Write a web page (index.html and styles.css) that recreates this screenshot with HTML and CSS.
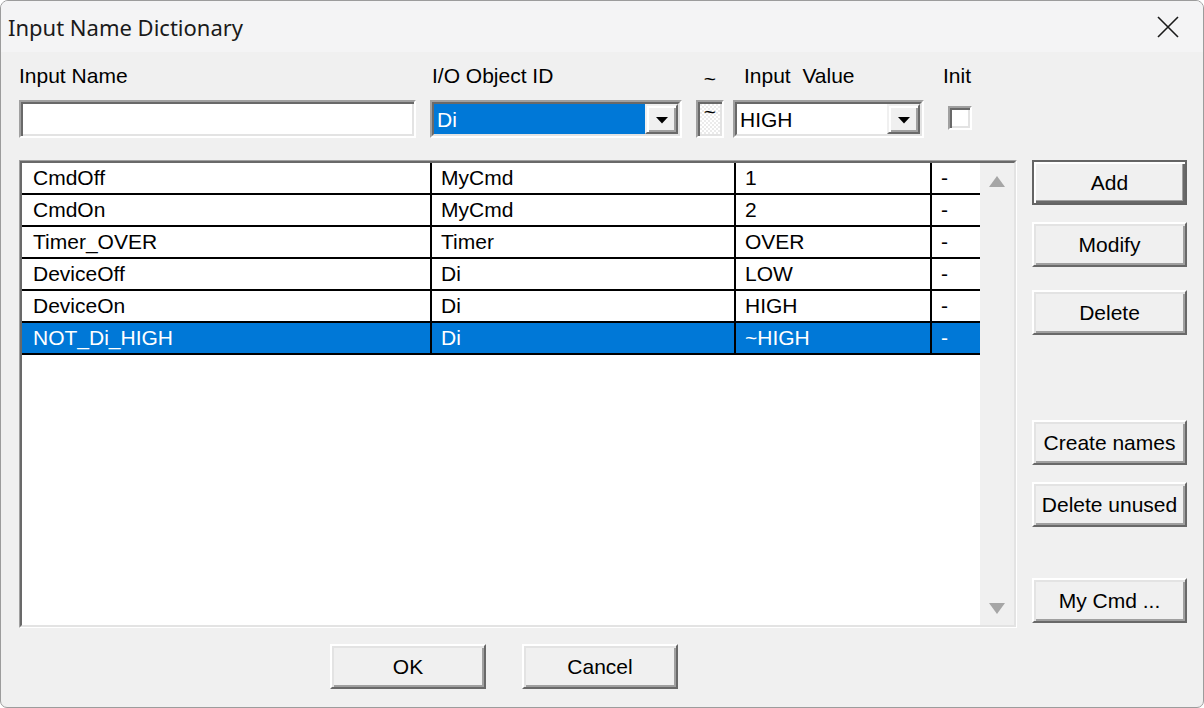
FILE: index.html
```html
<!DOCTYPE html>
<html>
<head>
<meta charset="utf-8">
<title>Input Name Dictionary</title>
<link rel="stylesheet" href="styles.css">
</head>
<body>
<div class="window">
  <div class="titlebar">
    <span class="title">Input Name Dictionary</span>
    <span class="close"><svg width="22" height="22" viewBox="0 0 22 22"><path d="M1 1L21 21M21 1L1 21" stroke="#1a1a1a" stroke-width="1.6" fill="none"/></svg></span>
  </div>
  <div class="content">
    <div class="fields">
      <div class="field f-name">
        <div class="label">Input Name</div>
        <div class="edit"></div>
      </div>
      <div class="field f-obj">
        <div class="label">I/O Object ID</div>
        <div class="combo"><div class="combo-inner">
          <div class="combo-text sel">Di</div>
          <div class="drop"><svg width="12" height="7" viewBox="0 0 12 7"><path d="M0 0H12L6 6.5Z" fill="#000"/></svg></div>
        </div></div>
      </div>
      <div class="field f-not">
        <div class="label tilde">~</div>
        <div class="toggle">~</div>
      </div>
      <div class="field f-val">
        <div class="label">Input&nbsp; Value</div>
        <div class="combo"><div class="combo-inner">
          <div class="combo-text">HIGH</div>
          <div class="drop"><svg width="12" height="7" viewBox="0 0 12 7"><path d="M0 0H12L6 6.5Z" fill="#000"/></svg></div>
        </div></div>
      </div>
      <div class="field f-init">
        <div class="label">Init</div>
        <div class="check-row"><div class="check"></div></div>
      </div>
    </div>

    <div class="main">
      <div class="list"><div class="list-inner">
        <div class="rows">
          <div class="row"><div class="cell">CmdOff</div><div class="cell">MyCmd</div><div class="cell">1</div><div class="cell">-</div></div>
          <div class="row"><div class="cell">CmdOn</div><div class="cell">MyCmd</div><div class="cell">2</div><div class="cell">-</div></div>
          <div class="row"><div class="cell">Timer_OVER</div><div class="cell">Timer</div><div class="cell">OVER</div><div class="cell">-</div></div>
          <div class="row"><div class="cell">DeviceOff</div><div class="cell">Di</div><div class="cell">LOW</div><div class="cell">-</div></div>
          <div class="row"><div class="cell">DeviceOn</div><div class="cell">Di</div><div class="cell">HIGH</div><div class="cell">-</div></div>
          <div class="row sel"><div class="cell">NOT_Di_HIGH</div><div class="cell">Di</div><div class="cell">~HIGH</div><div class="cell">-</div></div>
        </div>
        <div class="vscroll">
          <svg width="16" height="11" viewBox="0 0 16 11"><path d="M8 0L16 11H0Z" fill="#a6a6a6"/></svg>
          <svg width="16" height="11" viewBox="0 0 16 11"><path d="M0 0H16L8 11Z" fill="#a6a6a6"/></svg>
        </div>
      </div></div>
      <div class="side">
        <div class="btn default">Add</div>
        <div class="btn b-modify">Modify</div>
        <div class="btn b-delete">Delete</div>
        <div class="btn b-create">Create names</div>
        <div class="btn b-unused">Delete unused</div>
        <div class="btn b-mycmd">My Cmd ...</div>
      </div>
    </div>

    <div class="footer">
      <div class="btn">OK</div>
      <div class="btn">Cancel</div>
    </div>
  </div>
</div>
</body>
</html>
```

FILE: styles.css
```css
html, body {
  margin: 0;
  padding: 0;
  background: #ffffff;
}

body {
  font-family: "Liberation Sans", Arial, sans-serif;
  color: #000;
}

.window {
  width: 1204px;
  height: 708px;
  box-sizing: border-box;
  border: 1px solid #9c9c9c;
  border-radius: 8px 8px 7px 7px;
  background: #f0f0f0;
  overflow: hidden;
  display: flex;
  flex-direction: column;
}

.titlebar {
  height: 51px;
  flex: none;
  display: flex;
  align-items: center;
  background: #f4f4f5;
  padding-left: 7px;
}

.title {
  font-family: "Noto Sans", "Open Sans", sans-serif;
  font-size: 22px;
  color: #1a1a1a;
}

.close {
  margin-left: auto;
  margin-right: 24px;
  width: 22px;
  height: 22px;
  display: flex;
}

.content {
  flex: 1;
  padding: 0 16px 0 18px;
}

/* top field row */
.fields {
  display: flex;
  margin-top: 12px;
}

.label {
  height: 24px;
  line-height: 24px;
  font-size: 21px;
  margin-bottom: 12px;
  white-space: pre;
}

.f-name { width: 397px; margin-right: 14px; }
.f-obj { width: 252px; margin-right: 14px; }
.f-obj .label { padding-left: 2px; }
.f-not { width: 28px; margin-right: 9px; }
.f-not .label { text-align: center; padding-top: 3px; height: 21px; }
.f-val { width: 191px; margin-right: 19px; }
.f-val .label { padding-left: 11px; }
.f-init { width: 40px; }

.edit {
  height: 38px;
  box-sizing: border-box;
  border: 2px solid;
  border-color: #a0a0a0 #ffffff #ffffff #a0a0a0;
  box-shadow: inset 2px 2px #696969, inset -2px -2px #e3e3e3;
  background: #fff;
}

.combo {
  height: 38px;
  box-sizing: border-box;
  border: 2px solid;
  border-color: #a0a0a0 #ffffff #ffffff #a0a0a0;
}

.combo-inner {
  height: 100%;
  box-sizing: border-box;
  border: 2px solid;
  border-color: #696969 #e3e3e3 #e3e3e3 #696969;
  background: #fff;
  display: flex;
}

.combo-text {
  flex: 1;
  font-size: 21px;
  line-height: 31px;
  padding-left: 3px;
}

.combo-text.sel {
  background: #0078d7;
  color: #fff;
}

.drop {
  width: 33px;
  flex: none;
  box-sizing: border-box;
  border: 2px solid;
  border-color: #f0f0f0 #696969 #696969 #f0f0f0;
  box-shadow: inset 2px 2px #ffffff, inset -2px -2px #a0a0a0;
  background: #f0f0f0;
  display: flex;
  align-items: center;
  justify-content: center;
  padding-top: 2px;
}

.toggle {
  height: 38px;
  box-sizing: border-box;
  border: 2px solid;
  border-color: #a0a0a0 #ffffff #ffffff #a0a0a0;
  box-shadow: inset 2px 2px #696969, inset -2px -2px #e3e3e3;
  background: repeating-conic-gradient(#ffffff 0 25%, #ebebeb 0 50%) 0 0 / 4px 4px;
  text-align: center;
  font-size: 21px;
  line-height: 20px;
}

.check-row {
  display: flex;
  height: 38px;
  padding: 6px 0 0 5px;
  box-sizing: border-box;
}

.check {
  flex: none;
  width: 24px;
  height: 24px;
  box-sizing: border-box;
  border: 2px solid;
  border-color: #a0a0a0 #ffffff #ffffff #a0a0a0;
  box-shadow: inset 2px 2px #696969, inset -2px -2px #e3e3e3;
  background: #fff;
}

/* main list + side buttons */
.main {
  display: flex;
  margin-top: 22px;
  height: 468px;
}

.list {
  width: 998px;
  flex: none;
  box-sizing: border-box;
  border: 1px solid;
  border-color: #a0a0a0 #ffffff #ffffff #a0a0a0;
}

.list-inner {
  height: 100%;
  box-sizing: border-box;
  border: 2px solid;
  border-color: #696969 #e3e3e3 #e3e3e3 #696969;
  background: #fff;
  display: flex;
}

.rows {
  width: 958px;
  flex: none;
}

.row {
  display: grid;
  grid-template-columns: 410px 304px 196px 48px;
  height: 32px;
  box-sizing: border-box;
  border-bottom: 2px solid #000;
}

.row.sel {
  background: #0078d7;
  color: #fff;
}

.cell {
  border-right: 2px solid #000;
  padding-left: 9px;
  font-size: 21px;
  line-height: 30px;
  white-space: nowrap;
  overflow: hidden;
}

.cell:first-child { padding-left: 11px; }
.cell:last-child { border-right: 0; }

.vscroll {
  flex: 1;
  background: #f0f0f0;
  display: flex;
  flex-direction: column;
  justify-content: space-between;
  align-items: center;
  padding: 13px 0 11px;
}

.side {
  margin-left: 15px;
  width: 155px;
  display: flex;
  flex-direction: column;
}

.btn {
  height: 45px;
  box-sizing: border-box;
  border: 2px solid;
  border-color: #ffffff #696969 #696969 #ffffff;
  box-shadow: inset 2px 2px #e3e3e3, inset -2px -2px #a0a0a0;
  background: #f0f0f0;
  font-size: 21px;
  display: flex;
  align-items: center;
  justify-content: center;
  white-space: nowrap;
}

.btn.default {
  border-color: #646464;
  box-shadow: inset 2px 2px #ffffff, inset -2px -2px #696969, inset -3px -3px #a0a0a0;
}

.b-modify { margin-top: 17px; }
.b-delete { margin-top: 23px; }
.b-create { margin-top: 85px; }
.b-unused { margin-top: 17px; }
.b-mycmd { margin-top: 51px; }

.footer {
  display: flex;
  margin-top: 16px;
  padding-left: 311px;
}

.footer .btn { width: 156px; }
.footer .btn + .btn { margin-left: 36px; }
```
